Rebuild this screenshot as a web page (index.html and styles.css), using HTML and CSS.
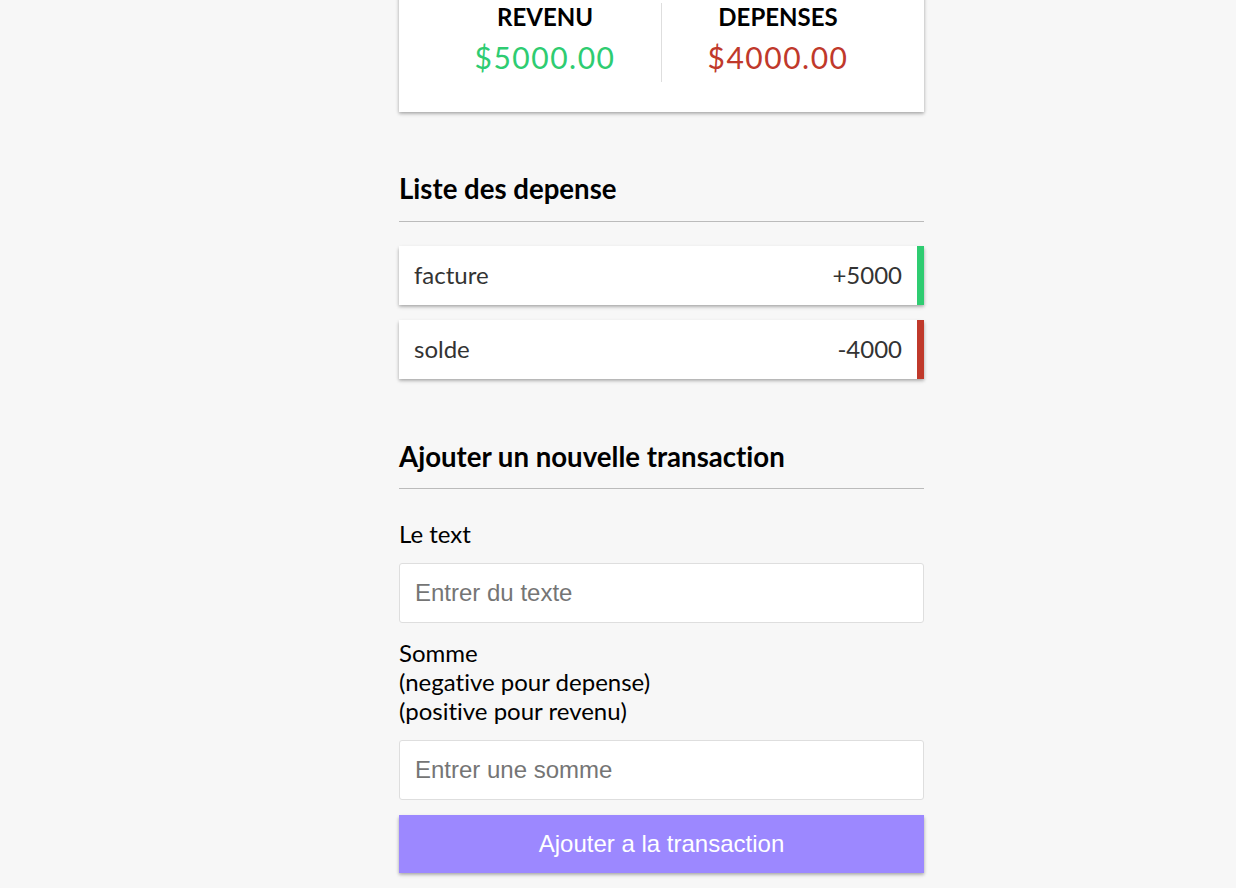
FILE: index.html
```html
<!DOCTYPE html>
<html lang="fr">
<head>
<meta charset="utf-8">
<title>Expense Tracker</title>
<link rel="stylesheet" href="styles.css">
</head>
<body>
  <div class="container">
    <div class="inc-exp-container">
      <div class="inc-col">
        <h4>Revenu</h4>
        <p class="money plus">$5000.00</p>
      </div>
      <div class="inc-col">
        <h4>Depenses</h4>
        <p class="money minus">$4000.00</p>
      </div>
    </div>

    <h3>Liste des depense</h3>
    <ul class="list">
      <li class="plus"><span>facture</span><span>+5000</span></li>
      <li class="minus"><span>solde</span><span>-4000</span></li>
    </ul>

    <h3>Ajouter un nouvelle transaction</h3>
    <form class="form">
      <div class="form-control">
        <label for="text">Le text</label>
        <input type="text" id="text" placeholder="Entrer du texte">
      </div>
      <div class="form-control">
        <label for="amount">Somme<br>(negative pour depense)<br>(positive pour revenu)</label>
        <input type="number" id="amount" placeholder="Entrer une somme">
      </div>
      <button type="button" class="btn">Ajouter a la transaction</button>
    </form>
  </div>
</body>
</html>
```

FILE: styles.css
```css
* {
  box-sizing: border-box;
}

html, body {
  margin: 0;
  padding: 0;
}

body {
  background-color: #f7f7f7;
  font-family: "Lato", "Noto Sans", sans-serif;
  font-size: 24px;
  color: #000;
  font-variant-ligatures: none;
}

.container {
  width: 525px;
  margin: 0 0 0 399px;
}

.inc-exp-container {
  background-color: #fff;
  box-shadow: 0 1.5px 4.5px rgba(0, 0, 0, 0.12), 0 1.5px 3px rgba(0, 0, 0, 0.24);
  padding: 30px;
  display: flex;
  justify-content: space-between;
  margin: -27.5px 0 30px;
}

.inc-col {
  flex: 1;
  text-align: center;
}

.inc-col:first-of-type {
  border-right: 1px solid #dedede;
}

h4 {
  margin: 0;
  font-size: 24px;
  font-weight: 700;
  text-transform: uppercase;
  line-height: 28.8px;
}

.money {
  font-size: 30px;
  letter-spacing: 1.5px;
  margin: 7.5px 0;
  line-height: 36px;
}

.money.plus {
  color: #2ecc71;
}

.money.minus {
  color: #c0392b;
}

h3 {
  font-size: 27.6px;
  font-weight: 700;
  line-height: 33.7px;
  border-bottom: 1px solid #bbb;
  padding-bottom: 15px;
  margin: 60px 0 15px;
}

.list {
  list-style-type: none;
  padding: 0;
  margin: 24px 0 61px;
}

.list li {
  background-color: #fff;
  box-shadow: 0 1.5px 4.5px rgba(0, 0, 0, 0.12), 0 1.5px 3px rgba(0, 0, 0, 0.24);
  color: #333;
  display: flex;
  justify-content: space-between;
  padding: 15px;
  margin: 15px 0;
  line-height: 28.8px;
}

.list li.plus {
  border-right: 7px solid #2ecc71;
}

.list li.minus {
  border-right: 7px solid #c0392b;
}

.form-control {
  line-height: 29px;
}

.form-control label {
  display: inline-block;
  margin: 15px 0;
  line-height: 29px;
}

.form-control input {
  display: block;
  width: 100%;
  border: 1px solid #dedede;
  border-radius: 3px;
  font-family: "Liberation Sans", Arial, sans-serif;
  font-size: 24px;
  padding: 15px;
  margin: 0;
  background: #fff;
  color: #000;
  line-height: normal;
  outline: none;
}

.form-control input::placeholder {
  color: #757575;
}

.form-control input::-webkit-outer-spin-button,
.form-control input::-webkit-inner-spin-button {
  -webkit-appearance: none;
  margin: 0;
}

.btn {
  display: block;
  width: 100%;
  background-color: #9c88ff;
  box-shadow: 0 1.5px 4.5px rgba(0, 0, 0, 0.12), 0 1.5px 3px rgba(0, 0, 0, 0.24);
  color: #fff;
  border: 0;
  border-radius: 0;
  font-family: "Liberation Sans", Arial, sans-serif;
  font-size: 24px;
  line-height: normal;
  padding: 15px;
  margin: 15px 0 45px;
  cursor: pointer;
}
```
